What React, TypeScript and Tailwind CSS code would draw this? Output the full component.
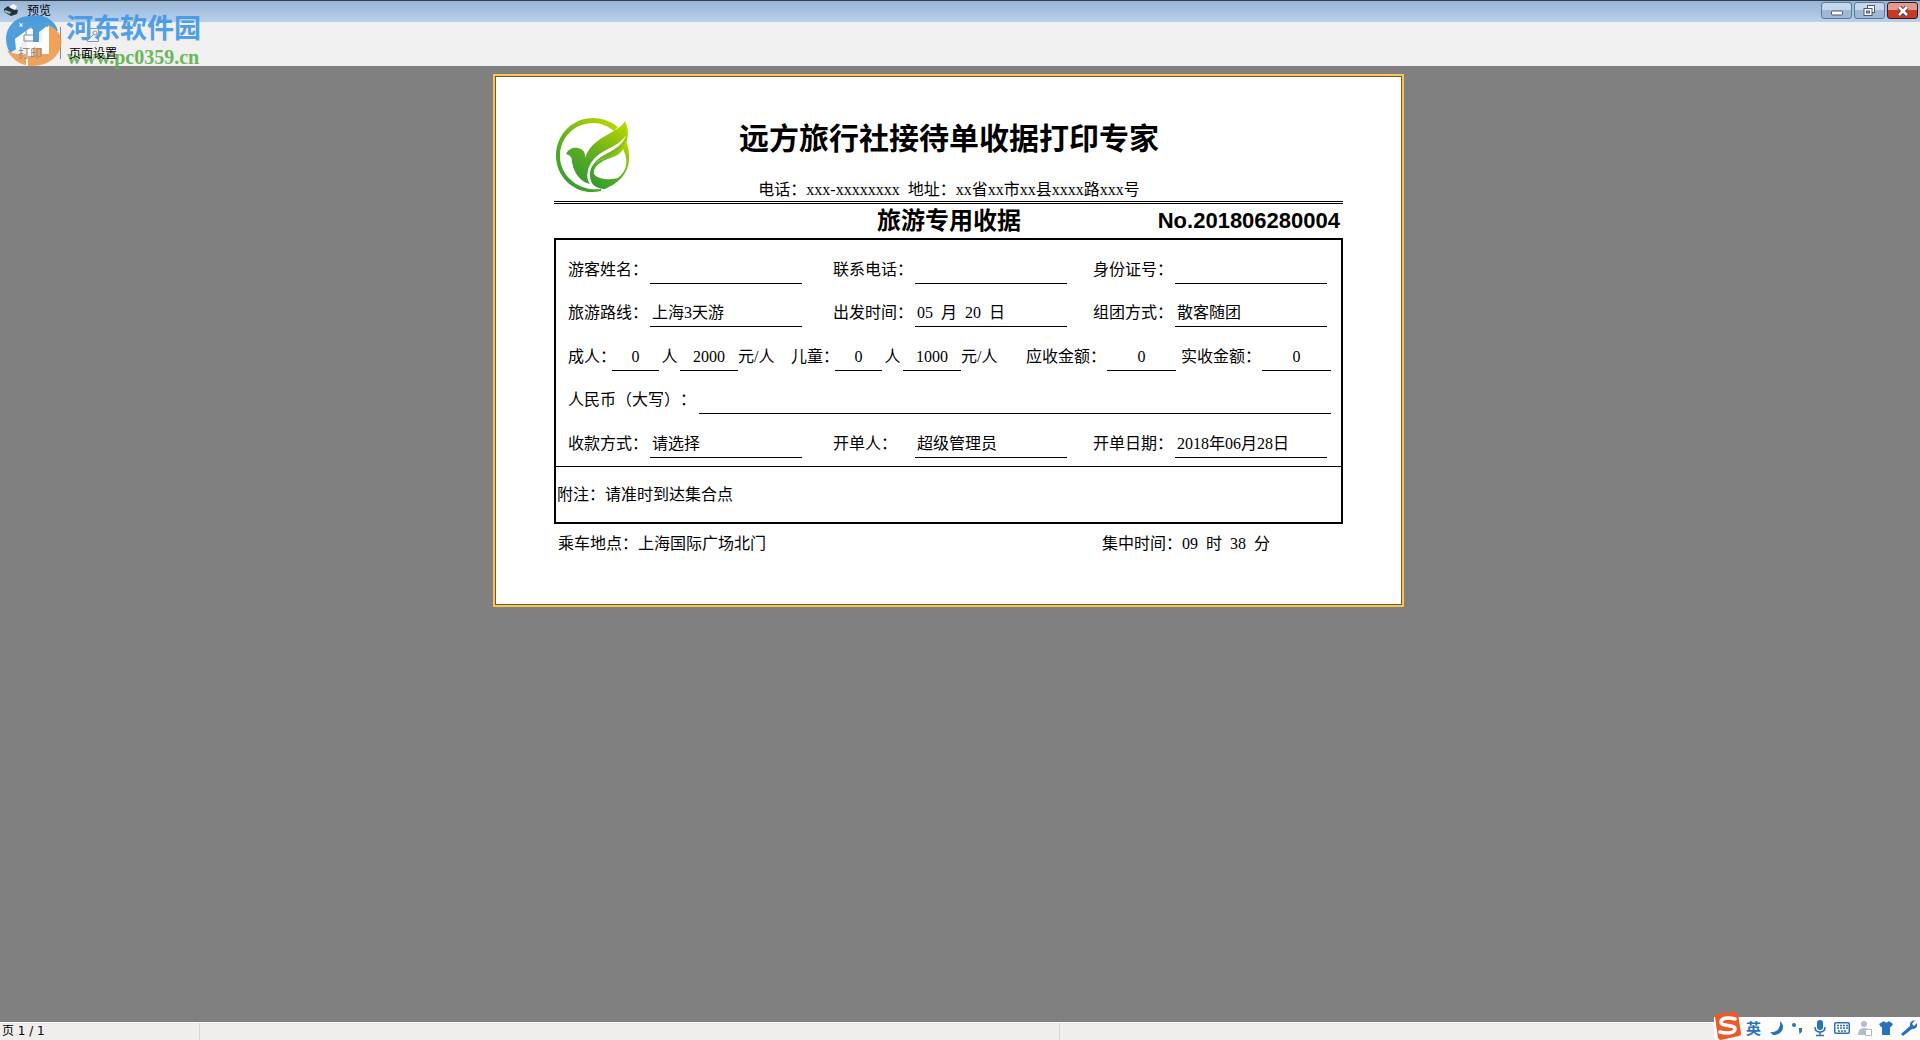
import { type FC, type ReactNode } from 'react';

interface FieldProps {
  label: string;
  children?: ReactNode;
}

const Field: FC<FieldProps> = ({ label, children }) => (
  <div className="flex">
    <span className="w-[82px]">{label}</span>
    <span className="flex h-[26px] w-[152px] gap-2 border-b border-black px-0.5">{children}</span>
  </div>
);

const Logo: FC = () => (
  <svg viewBox="0 0 76 76" className="h-[76px] w-[76px]" aria-label="logo">
    <defs>
      <linearGradient id="leaf" x1="0.2" y1="1" x2="0.8" y2="0">
        <stop offset="0" stopColor="#2f9a33" />
        <stop offset="0.5" stopColor="#66b01e" />
        <stop offset="1" stopColor="#b4d600" />
      </linearGradient>
    </defs>
    <g fill="url(#leaf)">
      <path d="M46 73 C22 79 1 60 1 38 C1 16 18 0 38 0 C48 0 57 4 63 9 L59 13 C53 8 46 5 38 5 C20 5 5 19 5 38 C5 58 24 74 46 71 Z" />
      <path d="M11 36 C14 30 19 29 23 30 C28 31 31 35 30 40 C35 25 47 20 57 14 C64 10 68 7 70 3 C75 14 73 23 68 30 C61 38 46 39 38 47 C31 54 31 60 35 66 C26 64 19 56 17 44 C17 39 15 37 11 36 Z" />
      <path d="M71 22 C78 43 74 61 50 71 C40 71 34 64 34 57 C34 44 48 42 58 36 C64 33 69 29 71 22 Z" />
    </g>
    <path d="M71 17 C64 29 49 30 39 41 C32 49 31 57 35 66 L38 68 C33 58 34 50 41 43 C51 34 67 31 71 17 Z" fill="#fff" />
    <path d="M68 31 C75 46 70 54 63 60 C56 62 43 62 39 56 C38 46 50 42 58 39 C63 37 66 35 68 31 Z" fill="#fff" />
  </svg>
);

const Watermark: FC = () => (
  <div className="pointer-events-none absolute top-3 left-1 flex opacity-90">
    <svg viewBox="0 0 60 56" className="h-14 w-[60px]">
      <path d="M6 41 C-4 24 6 5 25 4 C38 1 51 7 54 19 L43 19 L43 14 L35 20 L35 30 L29 30 L29 18 L24 18 L12 27 L17 27 L17 34 Z" fill="#3f97dc" />
      <path d="M44 13 C56 18 60 28 56 37 C52 49 38 55 24 54 L24 29 L30 29 L30 36 L39 36 L39 20 L44 15 Z" fill="#f19a4b" />
      <path d="M22 42 C14 43 8 42 3 38 C7 46 15 52 22 53 Z" fill="#f19a4b" />
      <path d="M11 27 L27 15 L29 17 L29 30 L38 30 L38 18 L45 14 L45 42 L38 42 L38 36 L29 36 L29 44 L23 44 L23 25 L17 29 L17 40 L12 38 Z" fill="#fff" />
      <path d="M15 10 l2 2 l2 -1 l-1 2 l1 2 l-2 -1 l-2 1 l1 -2 Z" fill="#fff" />
    </svg>
    <div className="pl-0.5 font-bold whitespace-nowrap">
      <div className="text-[27px] leading-[35px] text-[#3f97e8]">河东软件园</div>
      <div className="pl-px text-xl leading-5 font-bold text-[#5cb04c]">www.pc0359.cn</div>
    </div>
  </div>
);

const TitleBar: FC = () => (
  <header className="flex h-[22px] items-start justify-between border-t border-[#353c4a] bg-linear-to-b from-[#97b5d6] to-[#b9d1ea] pr-0.5 pl-[3px]">
    <div className="flex items-center gap-2 font-['Noto_Sans_CJK_SC',sans-serif] text-xs leading-[18px]">
      <svg viewBox="0 0 16 14" className="h-[14px] w-4">
        <path d="M1 6 L5 3 L9 6 L15 7 L14 11 L8 13 L1 9 Z" fill="#26323c" />
        <path d="M6 4 L10 1 L14 3 L12 7 Z" fill="#f4f8f8" />
        <path d="M2 7 L8 9 L7 11 L1 9 Z" fill="#8fc0b8" />
      </svg>
      预览
    </div>
    <div className="flex gap-0.5 pt-px">
      <button aria-label="最小化" className="flex h-[17px] w-[31px] items-center justify-center rounded-[3px] border border-[#5d7898] bg-linear-to-b from-[#c6d9ec] from-50% to-[#9db9d6] to-50%">
        <svg viewBox="0 0 12 6" className="mt-1 h-1.5 w-3"><rect x="0.5" y="1" width="11" height="4" rx="1" fill="#fff" stroke="#4c5a6e" /></svg>
      </button>
      <button aria-label="还原" className="flex h-[17px] w-[31px] items-center justify-center rounded-[3px] border border-[#5d7898] bg-linear-to-b from-[#c6d9ec] from-50% to-[#9db9d6] to-50%">
        <svg viewBox="0 0 13 12" className="h-3 w-[13px]" fill="#fff" stroke="#4c5a6e">
          <rect x="4.500" y="0.500" width="7" height="7" />
          <rect x="1" y="3.500" width="8" height="7" />
          <rect x="3.500" y="6" width="3" height="2" fill="#9db9d6" />
        </svg>
      </button>
      <button aria-label="关闭" className="flex h-[17px] w-[31px] items-center justify-center rounded-[3px] border border-[#3c1420] bg-linear-to-b from-[#e39a8c] from-50% to-[#c43c25] to-50%">
        <svg viewBox="0 0 12 10" className="h-2.5 w-3">
          <path d="M2 1 L10 9 M10 1 L2 9" stroke="#5a3b46" strokeWidth="4.500" />
          <path d="M2 1 L10 9 M10 1 L2 9" stroke="#fff" strokeWidth="2.500" />
        </svg>
      </button>
    </div>
  </header>
);

const Toolbar: FC = () => (
  <div className="flex h-11 items-start bg-[#f0f0f0] pt-[5px] pl-[18px] font-['Noto_Sans_CJK_SC',sans-serif] text-xs leading-4">
    <button disabled className="z-10 flex flex-col items-center gap-0.5 pr-[18px] text-[#8c8c8c]">
      <svg viewBox="0 0 16 16" className="h-4 w-4" fill="none" stroke="#6f8ca8">
        <path d="M4 8 V3 L6 1 H10 L12 3 V8 M2 8 H14 V14 H2 Z" />
      </svg>
      打印
    </button>
    <span className="h-8 border-l border-[#8a8a8a]" />
    <button className="z-10 flex flex-col items-center gap-0.5 pl-2 text-black">
      <svg viewBox="0 0 16 16" className="h-4 w-4" fill="none" stroke="#8798a8">
        <path d="M2.500 1.500 H13.500 V14.500 H2.500 Z M5 11 L9 7" />
        <circle cx="10" cy="6" r="2" />
      </svg>
      页面设置
    </button>
  </div>
);

const Receipt: FC = () => (
  <main className="w-[911px] border-2 border-[#f6c552] bg-white">
    <div className="border border-[#6b5a2c] px-[58px] pt-[41px] pb-[48px]">
      <div className="grid grid-cols-[76px_1fr_76px] border-b-3 border-double border-black pl-px">
        <Logo />
        <div className="flex flex-col items-center">
          <h1 className="text-3xl leading-[41px] font-bold whitespace-nowrap">远方旅行社接待单收据打印专家</h1>
          <p className="mt-[19px] flex gap-2 leading-[23px] whitespace-nowrap">
            <span>电话：xxx-xxxxxxxx</span>
            <span>地址：xx省xx市xx县xxxx路xxx号</span>
          </p>
        </div>
      </div>

      <div className="grid h-[34px] grid-cols-[1fr_auto_1fr] items-center pl-px font-bold">
        <h2 className="col-start-2 text-2xl leading-[34px]">旅游专用收据</h2>
        <span className="pr-[3px] text-right font-['Liberation_Sans',sans-serif] text-[22px] leading-[34px]">No.201806280004</span>
      </div>

      <section className="border-2 border-black">
        <div className="grid h-[227px] grid-rows-5 items-end border-b border-black pr-[10px] pb-2 pl-3 leading-6 whitespace-nowrap">
          <div className="grid grid-cols-[265px_260px_234px]">
            <Field label="游客姓名：" />
            <Field label="联系电话：" />
            <Field label="身份证号：" />
          </div>
          <div className="grid grid-cols-[265px_260px_234px]">
            <Field label="旅游路线：">上海3天游</Field>
            <Field label="出发时间：">
              <span>05</span>
              <span>月</span>
              <span>20</span>
              <span>日</span>
            </Field>
            <Field label="组团方式：">散客随团</Field>
          </div>
          <div className="flex">
            <span className="w-11">成人：</span>
            <span className="h-[26px] w-[47px] border-b border-black text-center">0</span>
            <span className="w-[21px] text-center">人</span>
            <span className="h-[26px] w-[58px] border-b border-black text-center">2000</span>
            <span className="w-[53px]">元/人</span>
            <span className="w-11">儿童：</span>
            <span className="h-[26px] w-[47px] border-b border-black text-center">0</span>
            <span className="w-[21px] text-center">人</span>
            <span className="h-[26px] w-[58px] border-b border-black text-center">1000</span>
            <span className="w-[65px]">元/人</span>
            <span className="w-[81px]">应收金额：</span>
            <span className="h-[26px] w-[69px] border-b border-black text-center">0</span>
            <span className="ml-[5px] w-[81px]">实收金额：</span>
            <span className="h-[26px] w-[69px] border-b border-black text-center">0</span>
          </div>
          <div className="flex">
            <span className="w-[131px]">人民币（大写）：</span>
            <span className="h-[26px] flex-1 border-b border-black" />
          </div>
          <div className="grid grid-cols-[265px_260px_234px]">
            <Field label="收款方式：">请选择</Field>
            <Field label="开单人：">超级管理员</Field>
            <Field label="开单日期：">2018年06月28日</Field>
          </div>
        </div>
        <p className="px-px py-[15px] leading-[25px]">附注：请准时到达集合点</p>
      </section>

      <div className="mt-2 flex justify-between pr-[73px] pl-1 leading-6">
        <span>乘车地点：上海国际广场北门</span>
        <span className="flex gap-2">
          <span>集中时间：09</span>
          <span>时</span>
          <span>38</span>
          <span>分</span>
        </span>
      </div>
    </div>
  </main>
);

const ImeBar: FC = () => (
  <div className="absolute right-0 bottom-0 flex h-[23px] w-[206px] items-center bg-[#fdfdfe] pb-0.5 pl-8 text-[#2a72b8]">
    <svg viewBox="0 0 28 28" className="absolute bottom-0 left-0 h-7 w-7">
      <path d="M1 5 Q0 3 3 2 L21 0 Q23 0 24 2 L27 21 Q27 24 25 24 L7 28 Q5 28 4 26 Z" fill="#ec5a28" />
      <path d="M21 7 C14 5 7 6 7 10 C7 15 21 12 21 17 C21 21 13 22 6 20" fill="none" stroke="#fff" strokeWidth="3.500" strokeLinecap="round" />
    </svg>
    <span className="w-[22px] font-['Noto_Sans_CJK_SC',sans-serif] text-[15px] leading-[21px] font-bold">英</span>
    <svg viewBox="0 0 152 20" className="h-5 w-[152px]" fill="#2a72b8">
      <path d="M12 3 C18 8 15 17 5 17 L2 14 C9 15 13 10 12 3 Z" />
      <circle cx="26" cy="7" r="2" />
      <path d="M31 10 h3 v3 q-1 3 -3 3 q1 -2 0 -3 Z" />
      <g transform="translate(4 0)">
        <rect x="45" y="2" width="6" height="10" rx="3" />
        <path d="M43 9 q0 5 5 5 q5 0 5 -5 M48 14 v3 M44 17.500 h8" fill="none" stroke="#2a72b8" strokeWidth="1.500" />
        <rect x="62.750" y="4.750" width="14.500" height="10.500" rx="1" fill="#fff" stroke="#2a72b8" strokeWidth="1.500" />
        <path d="M65 7.500 h11 M65 10 h11 M66 13 h8" stroke="#2a72b8" strokeWidth="1.500" strokeDasharray="2 1" />
        <circle cx="92" cy="6" r="3" fill="#b3bccd" />
        <path d="M86 17 Q86 10 92 10 Q97 10 97 12 V17 Z" fill="#b3bccd" />
        <rect x="93.500" y="11.500" width="6" height="6" fill="#fff" stroke="#b3bccd" />
        <path d="M107 6 L112 3 Q114 6 117 3 L121 6 L119 9 L118 9 V17 H110 V9 L109 9 Z" />
        <path d="M129 16 L138 8 Q137 3 143 2 L140 6 L142 8 L145 5 Q146 11 140 11 L131 18 Z" />
      </g>
    </svg>
  </div>
);

const StatusBar: FC = () => (
  <footer className="relative border-t border-white bg-[#f0eded]">
    <div className="flex h-[17px] font-['DejaVu_Sans','Noto_Sans_CJK_SC',sans-serif] text-xs leading-4">
      <span className="w-[200px] border-r border-[#d7d4d4] pl-0.5">页 1 / 1</span>
      <span className="w-[860px] border-r border-[#d7d4d4]" />
    </div>
    <ImeBar />
  </footer>
);

export default function App() {
  return (
    <div className="relative flex min-h-screen flex-col bg-[#808080] font-['Liberation_Serif','Noto_Sans_CJK_SC',serif] text-base leading-[25px] text-black [text-spacing-trim:space-all]">
      <TitleBar />
      <Toolbar />
      <div className="flex flex-1 items-start justify-center pt-2 pr-[23px]">
        <Receipt />
      </div>
      <StatusBar />
      <Watermark />
    </div>
  );
}
